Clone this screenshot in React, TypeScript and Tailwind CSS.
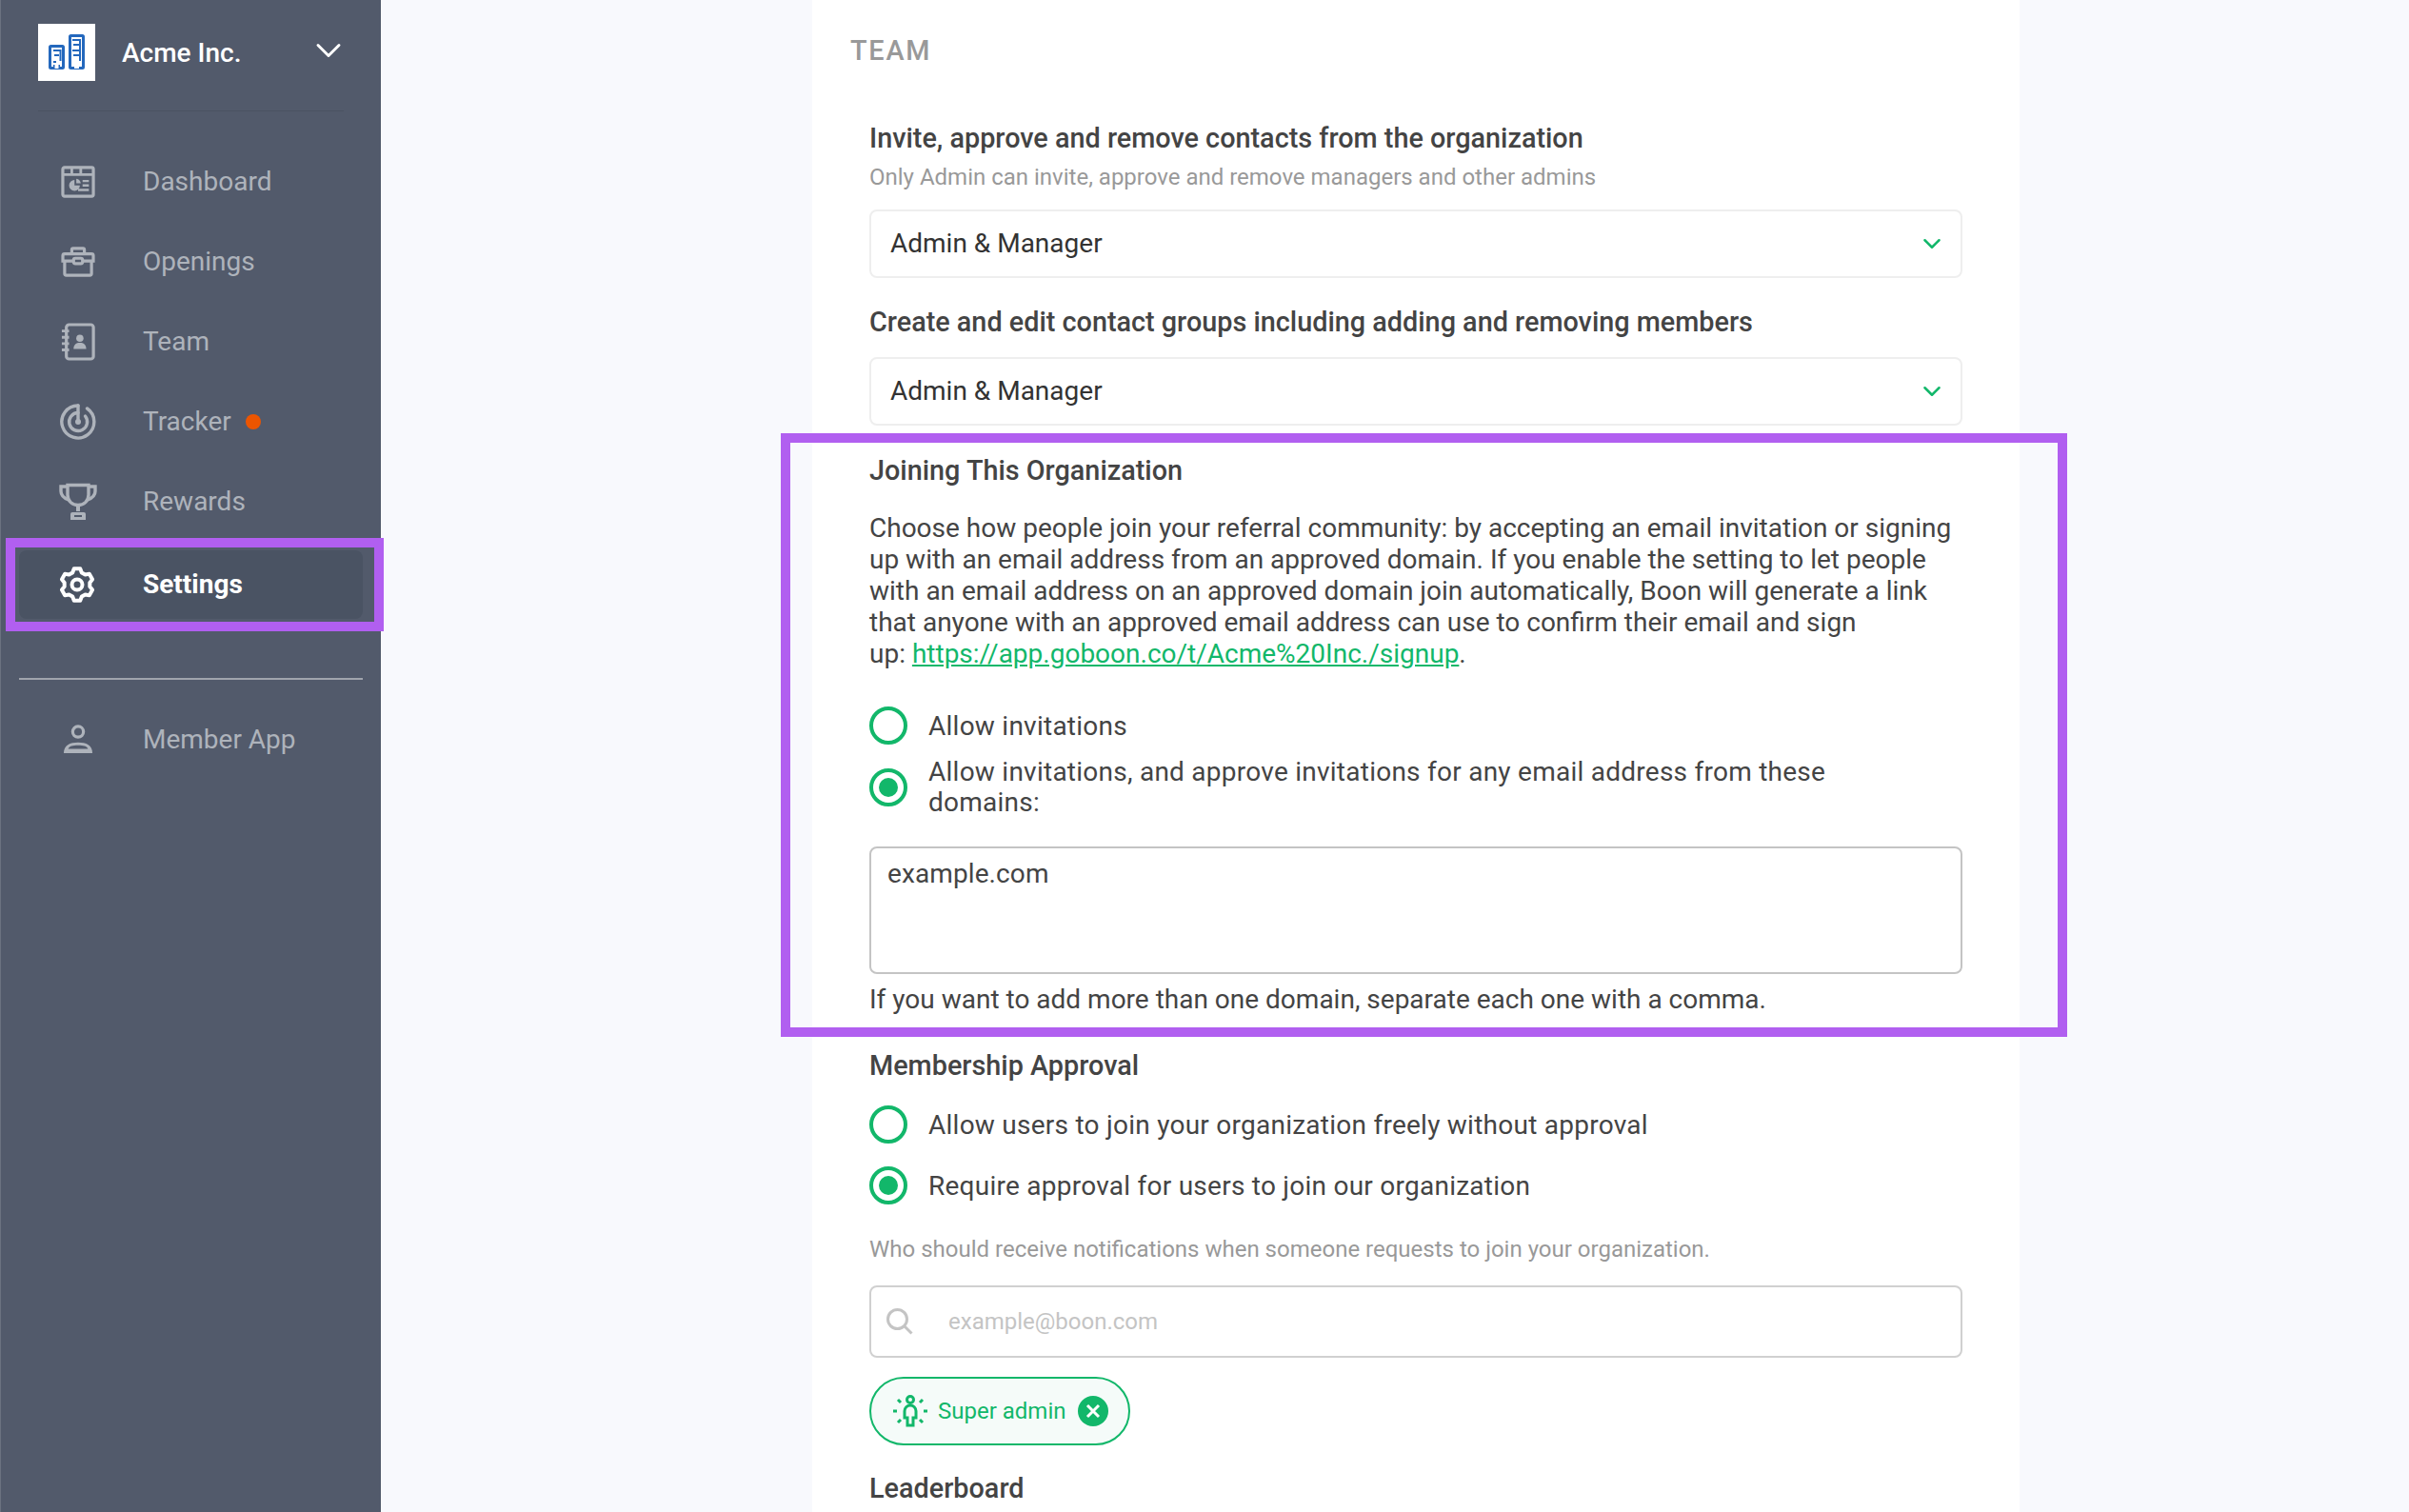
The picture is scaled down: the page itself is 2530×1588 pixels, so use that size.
import React from 'react';
import { ChevronDown } from 'lucide-react';

// six tooth gear, the one in the sidebar is more of a hexagon than lucide's
const gearPath = () => {
  const pts: string[] = [];
  for (let i = 0; i < 6; i++) {
    const a = -90 + i * 60;
    const corners: [number, number][] = [
      [a - 21, 13.5],
      [a - 11, 17],
      [a + 11, 17],
      [a + 21, 13.5],
    ];
    corners.forEach(([deg, r]) => {
      const rad = (deg * Math.PI) / 180;
      pts.push(`${(19 + r * Math.cos(rad)).toFixed(2)} ${(19 + r * Math.sin(rad)).toFixed(2)}`);
    });
  }
  return 'M' + pts.join('L') + 'Z';
};

const DashboardIcon = () => (
  <svg width="36" height="34" viewBox="0 0 38 36" fill="none">
    <rect x="2" y="2" width="34" height="32" rx="2" stroke="currentColor" strokeWidth="3.4" />
    <path d="M2 10h34M12 2v8M22 2v8" stroke="currentColor" strokeWidth="3" />
    <path d="M15 16a6 6 0 1 0 6 6h-6z" fill="currentColor" />
    <path d="M17 14.5a6 6 0 0 1 5 5h-5z" fill="currentColor" />
    <path d="M24 17h7M24 22h7M19 27h12" stroke="currentColor" strokeWidth="2.5" />
  </svg>
);

const OpeningsIcon = () => (
  <svg width="36" height="32" viewBox="0 0 38 34" fill="none" stroke="currentColor" strokeWidth="3.4">
    <path d="M12 8V3.5A1.5 1.5 0 0 1 13.5 2h11A1.5 1.5 0 0 1 26 3.5V8" />
    <path d="M4 8h30a2 2 0 0 1 2 2v6H2v-6a2 2 0 0 1 2-2z" />
    <path d="M4 16v14a2 2 0 0 0 2 2h26a2 2 0 0 0 2-2V16" />
    <rect x="14" y="13" width="10" height="6" rx="2" fill="#525a6b" />
  </svg>
);

const TeamIcon = () => (
  <svg width="36" height="40" viewBox="0 0 38 42" fill="none">
    <rect x="6" y="2" width="30" height="38" rx="3" stroke="currentColor" strokeWidth="3.4" />
    <path d="M1 9h8M1 16h8M1 23h8M1 30h8" stroke="currentColor" strokeWidth="3" />
    <circle cx="21" cy="17" r="4" fill="currentColor" />
    <path d="M14 29c0-5 3-7 7-7s7 2 7 7z" fill="currentColor" />
  </svg>
);

const TrackerIcon = () => (
  <svg width="38" height="38" viewBox="0 0 38 38" fill="none" stroke="currentColor" strokeWidth="3.4">
    <path d="M19 2A17 17 0 1 0 28.5 5" strokeLinecap="round" />
    <path d="M19 9.5A9.5 9.5 0 1 0 26.5 13" strokeLinecap="round" />
    <path d="M19 2v17" strokeLinecap="round" />
    <circle cx="19" cy="19" r="3" fill="currentColor" stroke="none" />
  </svg>
);

const RewardsIcon = () => (
  <svg width="40" height="40" viewBox="0 0 40 40" fill="none">
    <path d="M9 2.5h22v10c0 7-5 11-11 11s-11-4-11-11z" stroke="currentColor" strokeWidth="3.4" />
    <path d="M9 4H2v5c0 4 3 7 8 9M31 4h7v5c0 4-3 7-8 9" stroke="currentColor" strokeWidth="3.4" />
    <path d="M20 23v7" stroke="currentColor" strokeWidth="4" />
    <path d="M12 39v-6a2 2 0 0 1 2-2h12a2 2 0 0 1 2 2v6z" fill="currentColor" />
    <rect x="16" y="34" width="8" height="2" fill="#525a6b" />
  </svg>
);

const SettingsIcon = () => (
  <svg width="38" height="38" viewBox="0 0 38 38" fill="none" stroke="currentColor" strokeWidth="4" strokeLinejoin="round">
    <path d={gearPath()} />
    <circle cx="19" cy="19" r="5.5" />
  </svg>
);

const MemberIcon = () => (
  <svg width="32" height="32" viewBox="0 0 34 34" fill="none">
    <circle cx="17" cy="8" r="6" stroke="currentColor" strokeWidth="3.4" />
    <path d="M1 32c0-9 7-12 16-12s16 3 16 12z" fill="currentColor" />
    <path d="M6 27c1-3 5-4 11-4s10 1 11 4z" fill="#525a6b" />
  </svg>
);

const LogoIcon = () => (
  <svg width="38" height="37" viewBox="0 0 38 37" fill="none" stroke="#2468bd" strokeWidth="3">
    <rect x="1.5" y="12.5" width="14" height="23" rx="1" />
    <path d="M5 17h7.5v11M6 22h5M5 29h3" strokeWidth="2" />
    <path d="M5 36v-4h7v4" fill="#2468bd" stroke="none" />
    <path d="M6.5 36v-4h4v4" fill="white" stroke="none" />
    <rect x="22.5" y="1.5" width="14" height="34" rx="1" />
    <path d="M25 6h9M26 11h7M33 6v22M25 17h8M26 22h7" strokeWidth="2" />
    <path d="M27 36v-4h5v4" fill="white" stroke="none" />
  </svg>
);

const SuperAdminIcon = () => (
  <svg width="38" height="34" viewBox="0 0 38 34" fill="none" stroke="#12b76a" strokeWidth="3">
    <circle cx="19" cy="5" r="3.5" />
    <path d="M13 24v-7a6 6 0 0 1 12 0v7h-3v8h-6v-8z" />
    <path d="M1 17h4M33 17h4M6 5l3 3M32 5l-3 3M6 29l3-3M32 29l-3-3" />
  </svg>
);

const NavRow = ({ icon, label, dot }: { icon: React.ReactNode; label: string; dot?: boolean }) => (
  <div className="flex items-center h-[84px] text-[#aeb3bb]">
    <div className="ml-[61px] w-[40px] flex items-center justify-center">{icon}</div>
    <span className="ml-[48px] text-[28px]">{label}</span>
    {dot && <span className="ml-[15px] w-4 h-4 rounded-full bg-[#ec5500]" />}
  </div>
);

const Radio = ({ checked }: { checked?: boolean }) => (
  <span className="w-10 h-10 shrink-0 rounded-full border-[4px] border-[#12b76a] flex items-center justify-center">
    {checked && <span className="w-5 h-5 rounded-full bg-[#12b76a]" />}
  </span>
);

const SelectBox = ({ value }: { value: string }) => (
  <div className="h-[72px] border-2 border-[#eeeeee] rounded-lg flex items-center justify-between pl-[20px] pr-[15px] text-[28px] text-[#333333]">
    <span className="mb-[1px]">{value}</span>
    <ChevronDown size={30} strokeWidth={2} className="text-[#12b76a]" />
  </div>
);

const App: React.FC = () => {
  return (
    <div className="relative flex h-screen overflow-hidden bg-[#f8f9fd] font-['Roboto',sans-serif]">
      <aside className="w-[400px] shrink-0 bg-[#525a6b] border-l border-[#6b7280]">
        <div className="flex items-center h-[117px] mx-[39px] border-b border-[#4a5262] pb-[7px]">
          <div className="w-[60px] h-[60px] bg-white flex items-center justify-center">
            <LogoIcon />
          </div>
          <span className="ml-[28px] mt-[2px] text-[28px] font-medium text-white">Acme Inc.</span>
          <ChevronDown size={44} strokeWidth={1.6} className="ml-auto -mr-[6px] mb-[4px] text-white" />
        </div>
        <nav className="mt-[32px]">
          <NavRow icon={<DashboardIcon />} label="Dashboard" />
          <NavRow icon={<OpeningsIcon />} label="Openings" />
          <NavRow icon={<TeamIcon />} label="Team" />
          <NavRow icon={<TrackerIcon />} label="Tracker" dot />
          <NavRow icon={<RewardsIcon />} label="Rewards" />
          <div className="mt-[9px] mx-[19px] h-[72px] rounded-lg bg-[#4a5363] flex items-center text-white">
            <div className="ml-[41px] w-[40px] flex items-center justify-center"><SettingsIcon /></div>
            <span className="ml-[49px] text-[28px] font-bold">Settings</span>
          </div>
          <div className="mt-[62px] mx-[19px] h-[2px] bg-[#a0a4ad]" />
          <div className="mt-[21px]">
            <NavRow icon={<MemberIcon />} label="Member App" />
          </div>
        </nav>
      </aside>

      <main className="ml-[453px] w-[1268px] bg-white pl-[60px] pr-[60px] pt-[37px] text-[#444444] text-[28px] leading-[33px]">
        <h2 className="-ml-5 text-[28.8px] leading-8 font-medium tracking-[1.8px] text-[#999999]">TEAM</h2>

        <h3 className="mt-[58px] text-[28.8px] leading-9 font-medium">Invite, approve and remove contacts from the organization</h3>
        <p className="mt-[7px] text-2xl leading-8 text-[#999999]">Only Admin can invite, approve and remove managers and other admins</p>
        <div className="mt-[18px]"><SelectBox value="Admin &amp; Manager" /></div>

        <h3 className="mt-[28px] text-[28.8px] leading-9 font-medium">Create and edit contact groups including adding and removing members</h3>
        <div className="mt-[19px]"><SelectBox value="Admin &amp; Manager" /></div>

        <h3 className="mt-[29px] text-[28.8px] leading-9 font-medium">Joining This Organization</h3>
        <p className="mt-[26px] leading-[33px]">
          Choose how people join your referral community: by accepting an email invitation or signing<br />
          up with an email address from an approved domain. If you enable the setting to let people<br />
          with an email address on an approved domain join automatically, Boon will generate a link<br />
          that anyone with an approved email address can use to confirm their email and sign<br />
          up: <a className="text-[#12b76a] underline">https://app.goboon.co/t/Acme%20Inc./signup</a>.
        </p>

        <div className="mt-[39px] flex items-center gap-[22px] tracking-[0.25px]">
          <Radio />
          <span>Allow invitations</span>
        </div>
        <div className="mt-[13px] flex items-center gap-[22px] tracking-[0.25px]">
          <Radio checked />
          <span className="leading-[32px]">Allow invitations, and approve invitations for any email address from these<br />domains:</span>
        </div>

        <textarea
          readOnly
          value="example.com"
          className="mt-[30px] block w-full h-[134px] resize-none border-2 border-[#c4c4c4] rounded-lg px-[17px] py-[10px] tracking-[0.1px] leading-[33px] outline-none"
        />
        <p className="mt-[10px] leading-[33px]">If you want to add more than one domain, separate each one with a comma.</p>

        <h3 className="mt-[35px] text-[28.8px] leading-9 font-medium">Membership Approval</h3>
        <div className="mt-[24px] flex items-center gap-[22px] tracking-[0.25px]">
          <Radio />
          <span>Allow users to join your organization freely without approval</span>
        </div>
        <div className="mt-[24px] flex items-center gap-[22px] tracking-[0.25px]">
          <Radio checked />
          <span>Require approval for users to join our organization</span>
        </div>

        <p className="mt-[31px] text-2xl leading-8 text-[#999999]">Who should receive notifications when someone requests to join your organization.</p>
        <div className="mt-[22px] h-[76px] border-2 border-[#d0d0d0] rounded-lg flex items-center pl-[16px]">
          <svg width="28" height="28" viewBox="0 0 28 28" fill="none" stroke="#c4c4c4" strokeWidth="3">
            <circle cx="11.5" cy="11.5" r="10" />
            <path d="M18.5 18.5l8 8" />
          </svg>
          <span className="ml-[37px] text-2xl text-[#c4c4c4]">example@boon.com</span>
        </div>

        <div className="mt-[20px] w-[274px] h-[72px] rounded-full border-2 border-[#12b76a] bg-[#f5fbf9] flex items-center pl-[22px] text-[#12b76a]">
          <SuperAdminIcon />
          <span className="ml-[10px] text-2xl">Super admin</span>
          <span className="ml-[12px] w-8 h-8 rounded-full bg-[#12b76a] flex items-center justify-center">
            <svg width="16" height="16" viewBox="0 0 16 16" stroke="white" strokeWidth="3"><path d="M2 2l12 12M14 2L2 14" /></svg>
          </span>
        </div>

        <h3 className="mt-[27px] text-[28.8px] leading-9 font-medium">Leaderboard</h3>
      </main>

      <div className="absolute left-[6px] top-[565px] w-[397px] h-[98px] border-[10px] border-[#b15ff0]" />
      <div className="absolute left-[820px] top-[455px] w-[1351px] h-[634px] border-[10px] border-[#b15ff0]" />
    </div>
  );
};

export default App;
